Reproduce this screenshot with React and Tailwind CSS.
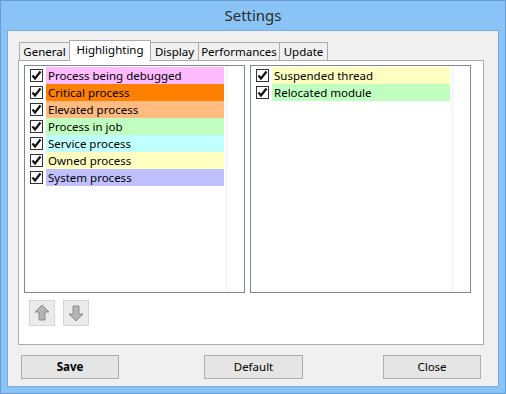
const leftItems = [
  { label: 'Process being debugged', color: 'bg-[#ffbbff]' },
  { label: 'Critical process', color: 'bg-[#ff8000]' },
  { label: 'Elevated process', color: 'bg-[#ffbb80]' },
  { label: 'Process in job', color: 'bg-[#c0ffc0]' },
  { label: 'Service process', color: 'bg-[#c0ffff]' },
  { label: 'Owned process', color: 'bg-[#ffffc0]' },
  { label: 'System process', color: 'bg-[#c0c0ff]' },
];

const rightItems = [
  { label: 'Suspended thread', color: 'bg-[#ffffc0]' },
  { label: 'Relocated module', color: 'bg-[#c0ffc0]' },
];

const tabs = [
  { label: 'General', w: 'w-[51px]' },
  { label: 'Highlighting', w: 'w-[82px]', active: true },
  { label: 'Display', w: 'w-[49px]' },
  { label: 'Performances', w: 'w-[82px]' },
  { label: 'Update', w: 'w-[49px]' },
];

function Check() {
  return (
    <div className="w-[13px] h-[13px] border border-[#333] bg-white flex items-center justify-center shrink-0">
      <svg width="11" height="11" viewBox="0 0 11 11">
        <path d="M1.5 5.5 L4 8.5 L9.5 1.5" fill="none" stroke="#111" strokeWidth="2.2" />
      </svg>
    </div>
  );
}

function ListBox({ items }) {
  return (
    <div className="relative w-[221px] h-[228px] border border-[#828790] bg-white pt-[1px]">
      <div className="absolute top-0 bottom-0 left-[201px] w-px bg-[#eef1f6]" />
      {items.map((it) => (
        <div key={it.label} className="flex items-center h-[17px]">
          <div className="w-[21px] flex justify-end pr-[3px]">
            <Check />
          </div>
          <div className={`w-[178px] h-[17px] ${it.color} pl-[2px] leading-[17px] text-[11.5px] text-black`}>
            {it.label}
          </div>
        </div>
      ))}
    </div>
  );
}

function ArrowBtn({ up }) {
  return (
    <div className="w-[26px] h-[26px] bg-[#ebebeb] border border-[#d6d6d6] flex items-center justify-center">
      <svg width="16" height="18" viewBox="0 0 16 18" className={up ? '' : 'rotate-180'}>
        <path d="M8 1 L15 8 L11 8 L11 16 L5 16 L5 8 L1 8 Z" fill="#b4b4b4" stroke="#8c8c8c" strokeWidth="1" />
      </svg>
    </div>
  );
}

function Button({ children, bold, className }) {
  return (
    <div
      className={`h-[24px] border border-[#adadad] bg-[#e5e5e5] flex items-center justify-center text-[11.5px] text-black ${
        bold ? 'font-bold' : ''
      } ${className}`}
    >
      {children}
    </div>
  );
}

export default function App() {
  return (
    <div
      className="w-[506px] h-[394px] bg-[#8ac4f6] border border-[#6a9ed2] flex flex-col"
      style={{ fontFamily: '"Noto Sans", "Open Sans", sans-serif' }}
    >
      <div className="h-[29px] flex items-center justify-center text-[15px] text-[#2b2b2b]">Settings</div>
      <div className="ml-[6px] w-[492px] h-[357px] border border-[#7aaddd] bg-[#f0f0f0] flex flex-col">
        <div className="flex items-end h-[29px] pl-[11px]">
          {tabs.map((t) => (
            <div
              key={t.label}
              className={`${t.w} text-center whitespace-nowrap text-[11.5px] text-black border border-b-0 border-[#acacac] first:ml-0 -ml-px ${
                t.active
                  ? 'h-[21px] bg-white leading-[18px] -mb-px relative z-10'
                  : 'h-[18px] bg-[#f0f0f0] leading-[17px]'
              }`}
            >
              {t.label}
            </div>
          ))}
        </div>
        <div className="ml-[10px] w-[466px] h-[285px] border border-[#acacac] bg-white pt-[4px] pl-[5px]">
          <div className="flex gap-[5px]">
            <ListBox items={leftItems} />
            <ListBox items={rightItems} />
          </div>
          <div className="flex gap-[8px] mt-[7px] ml-[5px]">
            <ArrowBtn up />
            <ArrowBtn />
          </div>
        </div>
        <div className="flex mt-[10px] pl-[13px]">
          <Button bold className="w-[98px]">Save</Button>
          <Button className="w-[99px] ml-[85px]">Default</Button>
          <Button className="w-[98px] ml-[80px]">Close</Button>
        </div>
      </div>
    </div>
  );
}
